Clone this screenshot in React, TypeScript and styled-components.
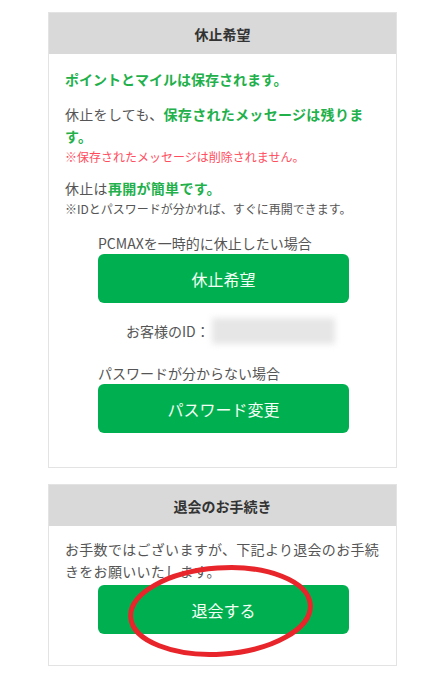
import React from 'react';
import styled, { createGlobalStyle } from 'styled-components';

const GlobalStyle = createGlobalStyle`
    html, body {
        margin: 0;
        padding: 0;
        background: #ffffff;
    }
    body {
        font-family: "Noto Sans CJK JP", "Noto Sans", sans-serif;
        color: #555555;
    }
`

const Page = styled.div`
    width: 430px;
    padding: 12px 0 16px 48px;
    box-sizing: border-box;
    display: flex;
    flex-direction: column;
    gap: 16px;
`

const Card = styled.section`
    width: 349px;
    border: 1px solid #e3e3e3;
    box-sizing: border-box;
    background: #fff;
`

const CardHeader = styled.h2`
    margin: 0;
    height: 41px;
    background: #d9d9d9;
    display: flex;
    align-items: center;
    justify-content: center;
    font-size: 14px;
    font-weight: bold;
    color: #333;
`

const CardBody = styled.div<{ $top: number; $bottom: number }>`
    padding: ${p => p.$top}px 15px ${p => p.$bottom}px 16px;
    display: flex;
    flex-direction: column;
`

const Lead = styled.p`
    margin: 0 0 13px;
    font-size: 14px;
    line-height: 22px;
    font-weight: bold;
    color: #22b04b;
`

const Text = styled.p<{ $gap?: number }>`
    margin: 0 0 ${p => p.$gap ?? 0}px;
    font-size: 14px;
    line-height: 22px;
    letter-spacing: 0.3px;
`

const Em = styled.span`
    font-weight: bold;
    color: #22b04b;
`

const Note = styled.p<{ $red?: boolean; $gap?: number }>`
    margin: 0 0 ${p => p.$gap ?? 0}px;
    font-size: 12px;
    line-height: 20px;
    color: ${p => (p.$red ? '#ff4d5e' : '#555')};
`

const Action = styled.div`
    width: 251px;
    margin-left: 33px;
    display: flex;
    flex-direction: column;
`

const Label = styled.div`
    font-size: 14px;
    line-height: 22px;
`

const GreenButton = styled.button`
    position: relative;
    width: 251px;
    height: 49px;
    border: none;
    border-radius: 6px;
    background: #00b050;
    color: #f4fff6;
    font-family: inherit;
    font-size: 16px;
    cursor: pointer;
`

const IdRow = styled.div`
    display: flex;
    align-items: center;
    gap: 2px;
    margin: 15px 0 18px 61px;
    font-size: 14px;
`

const Blur = styled.div`
    width: 123px;
    height: 26px;
    background: #e6e6e6;
    filter: blur(3px);
`

const Circle = styled.svg`
    position: absolute;
    left: 29px;
    top: -21px;
    width: 187px;
    height: 94px;
    overflow: visible;
    pointer-events: none;
`

export default function App() {
    return (
        <>
            <GlobalStyle />
            <Page>
                <Card>
                    <CardHeader>休止希望</CardHeader>
                    <CardBody $top={14} $bottom={34}>
                        <Lead>ポイントとマイルは保存されます。</Lead>
                        <Text>休止をしても、<Em>保存されたメッセージは残りま<br />す。</Em></Text>
                        <Note $red $gap={10}>※保存されたメッセージは削除されません。</Note>
                        <Text>休止は<Em>再開が簡単です。</Em></Text>
                        <Note $gap={13}>※IDとパスワードが分かれば、すぐに再開できます。</Note>
                        <Action>
                            <Label>PCMAXを一時的に休止したい場合</Label>
                            <GreenButton>休止希望</GreenButton>
                        </Action>
                        <IdRow>
                            お客様のID：
                            <Blur />
                        </IdRow>
                        <Action>
                            <Label>パスワードが分からない場合</Label>
                            <GreenButton>パスワード変更</GreenButton>
                        </Action>
                    </CardBody>
                </Card>
                <Card>
                    <CardHeader>退会のお手続き</CardHeader>
                    <CardBody $top={12} $bottom={31}>
                        <Text $gap={3}>お手数ではございますが、下記より退会のお手続きをお願いいたします。</Text>
                        <Action>
                            <GreenButton>
                                退会する
                                <Circle viewBox="0 0 187 94">
                                    <ellipse
                                        cx="93.5"
                                        cy="47"
                                        rx="90"
                                        ry="43"
                                        fill="none"
                                        stroke="#e8252a"
                                        strokeWidth="5"
                                        transform="rotate(-4 93.5 47)"
                                    />
                                </Circle>
                            </GreenButton>
                        </Action>
                    </CardBody>
                </Card>
            </Page>
        </>
    );
}
